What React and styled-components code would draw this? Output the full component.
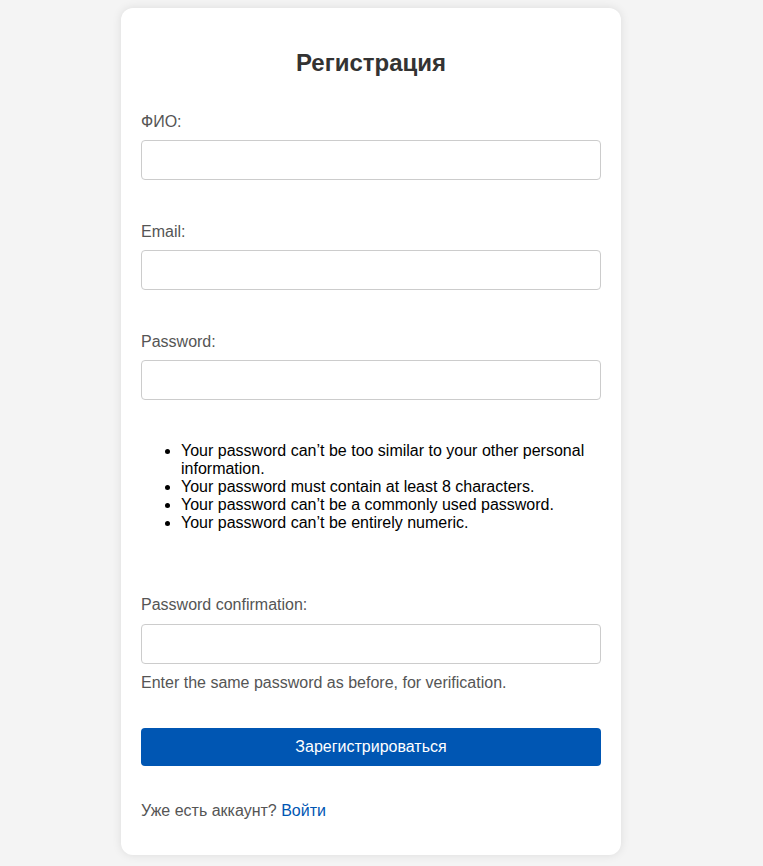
import styled, { createGlobalStyle } from "styled-components";

const GlobalStyle = createGlobalStyle`
  body {
    margin: 0;
    background-color: #f4f4f4;
    font-family: "Liberation Sans", Arial, sans-serif;
  }
`;

const Page = styled.div`
  display: flex;
  justify-content: center;
  padding: 8px 21px 10px 0;
`;

const Card = styled.div`
  width: 500px;
  box-sizing: border-box;
  padding: 20px;
  background: #fff;
  border-radius: 12px;
  box-shadow: 0 0 10px rgba(0, 0, 0, 0.1);
`;

const Title = styled.h2`
  margin: 21px 0 36px;
  text-align: center;
  font-size: 24px;
  line-height: 28px;
  font-weight: bold;
  color: #333;
`;

const Field = styled.div`
  margin-bottom: ${({ $gap }) => $gap}px;
`;

const Label = styled.label`
  display: block;
  margin-bottom: ${({ $mb }) => $mb}px;
  font-size: 16px;
  line-height: 18px;
  color: #555;
`;

const Input = styled.input`
  display: block;
  width: 100%;
  height: 40px;
  box-sizing: border-box;
  border: 1px solid #ccc;
  border-radius: 4px;
  padding: 8px 10px;
  font-size: 16px;
`;

const Rules = styled.ul`
  margin: 42px 0 64px;
  padding-left: 40px;
  color: #000;
  font-size: 16px;
  line-height: 18px;
`;

const HelpText = styled.p`
  margin: 10px 0 36px;
  font-size: 16px;
  line-height: 18px;
  color: #555;
`;

const Button = styled.button`
  display: block;
  width: 100%;
  height: 38px;
  border: none;
  border-radius: 4px;
  background-color: #0056b3;
  color: #fff;
  font-family: "Liberation Sans", Arial, sans-serif;
  font-size: 16px;
  cursor: pointer;
`;

const Footer = styled.p`
  margin: 36px 0 15px;
  font-size: 16px;
  line-height: 18px;
  color: #555;

  a {
    color: #0056b3;
    text-decoration: none;
  }
`;

const App = () => {
  return (
    <>
      <GlobalStyle />
      <Page>
        <Card>
          <Title>Регистрация</Title>
          <form onSubmit={(e) => e.preventDefault()}>
            <Field $gap={43}>
              <Label htmlFor="fio" $mb={9}>ФИО:</Label>
              <Input id="fio" type="text" />
            </Field>
            <Field $gap={43}>
              <Label htmlFor="email" $mb={9}>Email:</Label>
              <Input id="email" type="email" />
            </Field>
            <Field $gap={0}>
              <Label htmlFor="password1" $mb={9}>Password:</Label>
              <Input id="password1" type="password" />
            </Field>
            <Rules>
              <li>Your password can’t be too similar to your other personal information.</li>
              <li>Your password must contain at least 8 characters.</li>
              <li>Your password can’t be a commonly used password.</li>
              <li>Your password can’t be entirely numeric.</li>
            </Rules>
            <Field $gap={0}>
              <Label htmlFor="password2" $mb={10}>Password confirmation:</Label>
              <Input id="password2" type="password" />
            </Field>
            <HelpText>Enter the same password as before, for verification.</HelpText>
            <Button type="submit">Зарегистрироваться</Button>
          </form>
          <Footer>
            Уже есть аккаунт? <a href="#">Войти</a>
          </Footer>
        </Card>
      </Page>
    </>
  );
};

export default App;
